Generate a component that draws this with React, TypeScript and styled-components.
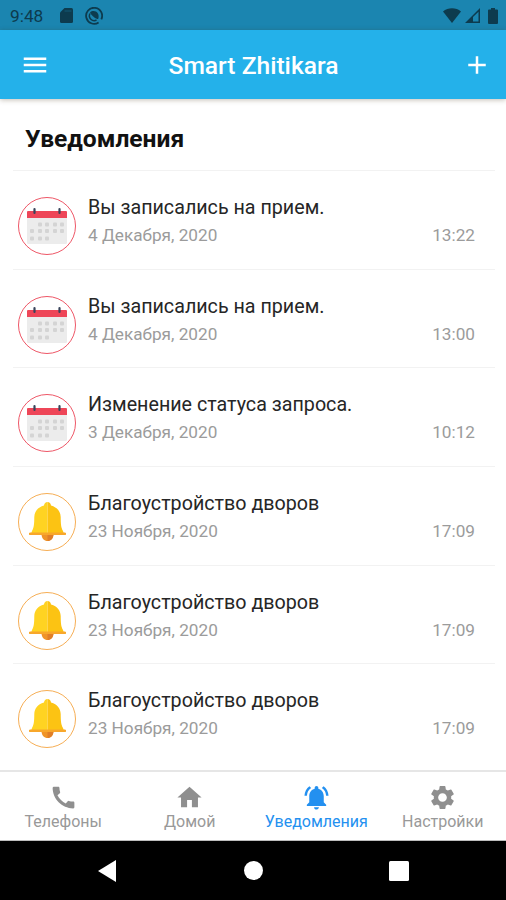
import React from "react";
import styled, { createGlobalStyle } from "styled-components";
import { MdCall, MdHome, MdNotificationsActive, MdSettings, MdMenu, MdAdd } from "react-icons/md";

const GlobalStyle = createGlobalStyle`
  * { box-sizing: border-box; }
  body { margin: 0; background: #fff; font-family: Roboto, "Noto Sans", sans-serif; }
`;

const Screen = styled.div`
  width: 506px;
  height: 900px;
  display: flex;
  flex-direction: column;
  overflow: hidden;
  background: #fff;
`;

const StatusBar = styled.div`
  height: 30px;
  flex: none;
  display: flex;
  align-items: center;
  justify-content: space-between;
  padding: 1px 8px 0 10px;
  background: #1b85b0;
  color: #0d3b4e;
`;

const StatusGroup = styled.div<{ $gap: number }>`
  display: flex;
  align-items: center;
  gap: ${(p) => p.$gap}px;
  svg { display: block; }
`;

const Clock = styled.span`
  width: 36px;
  margin-right: 2px;
  font-size: 17.3px;
  line-height: 28px;
  white-space: nowrap;
`;

const AppBar = styled.header`
  height: 69px;
  flex: none;
  display: grid;
  grid-template-columns: 30px 1fr 30px;
  align-items: center;
  padding: 1px 14px 0 20px;
  background: #24b1ea;
  color: #fff;
  box-shadow: 0 1px 5px rgba(60, 40, 10, 0.3);
  z-index: 1;
  svg { display: block; }
`;

const AppTitle = styled.h1`
  margin: 0 4px 0 0;
  padding: 1px 1px 0 0;
  font-size: 24.6px;
  font-weight: 500;
  line-height: 30px;
  text-align: center;
`;

const Content = styled.main`
  flex: 1;
  min-height: 0;
  padding: 0 11px 0 13px;
`;

const Heading = styled.h2`
  margin: 0;
  height: 71px;
  padding: 25px 0 0 12px;
  font-size: 24.6px;
  line-height: 30px;
  font-weight: 700;
  color: #111;
`;

const Row = styled.article`
  height: 98.7px;
  display: flex;
  border-top: 1px solid #f2f2f2;
  padding: 26px 20px 0 5px;
`;

const Avatar = styled.div<{ $color: string }>`
  width: 58px;
  height: 58px;
  flex: none;
  margin-right: 12px;
  border: 1.5px solid ${(p) => p.$color};
  border-radius: 50%;
  display: flex;
  align-items: center;
  justify-content: center;
  svg { display: block; }
`;

const RowText = styled.div`
  flex: 1;
  min-width: 0;
`;

const RowTitle = styled.div`
  margin-top: -3px;
  font-size: 19.7px;
  line-height: 28px;
  color: #262626;
  white-space: nowrap;
`;

const RowMeta = styled.div`
  display: flex;
  justify-content: space-between;
  margin-top: -1px;
  font-size: 17.2px;
  line-height: 28px;
  color: #9b9b9b;
`;

const TabBar = styled.nav`
  height: 71px;
  flex: none;
  display: grid;
  grid-template-columns: repeat(4, 1fr);
  border-top: 2px solid #e6e6e6;
  border-bottom: 1px solid #bdbdbd;
  background: #fff;
`;

const Tab = styled.div<{ $active?: boolean }>`
  display: flex;
  flex-direction: column;
  align-items: center;
  padding-top: 11px;
  font-size: 16px;
  line-height: 20px;
  white-space: nowrap;
  color: ${(p) => (p.$active ? "#2390f0" : "#999")};
  svg { display: block; color: ${(p) => (p.$active ? "#2390f0" : "#8f8f8f")}; }
`;

const SystemBar = styled.footer`
  height: 59px;
  flex: none;
  display: grid;
  grid-template-columns: 32px 32px 32px;
  justify-content: center;
  column-gap: 114px;
  align-items: center;
  justify-items: center;
  background: #000;
`;

const SdIcon = () => (
  <svg width="13" height="15" viewBox="0 0 13 15">
    <path fill="currentColor" d="M4.500 0h7A1.500 1.500 0 0 1 13 1.500v12A1.500 1.500 0 0 1 11.500 15h-10A1.500 1.500 0 0 1 0 13.500v-9z" />
    <path stroke="#1b85b0" strokeWidth="1.200" opacity=".35" d="M4.500 3h7" />
  </svg>
);

const SyncIcon = () => (
  <svg width="18" height="18" viewBox="0 0 18 18" fill="none" stroke="currentColor">
    <path strokeWidth="1.800" d="M13.600 15.400A8 8 0 1 1 16.300 12.300" />
    <path strokeWidth="1.500" d="M5 6.500a4.800 4.800 0 0 0 6.500 6.500" />
    <path fill="currentColor" stroke="none" d="M5 5.500C7 3.500 11 3.500 12.900 6.400c1 1.700.9 3.700.2 5.700C11 12 6.500 9 5 5.500z" />
  </svg>
);

const WifiIcon = () => (
  <svg width="18" height="15" viewBox="0 0 18 15">
    <path fill="currentColor" d="M9 15 0 3.500C5-.8 13-.8 18 3.500z" />
  </svg>
);

const SignalIcon = () => (
  <svg width="15" height="15" viewBox="0 0 15 15">
    <path fill="currentColor" fillRule="evenodd" d="M15 0v15H0zM13.500 3.700 8 9v4.500h5.500z" />
  </svg>
);

const BatteryIcon = () => (
  <svg width="10" height="16" viewBox="0 0 10 16">
    <path fill="currentColor" d="M3 0h4v1.600h2a1 1 0 0 1 1 1V15a1 1 0 0 1-1 1H1a1 1 0 0 1-1-1V2.600a1 1 0 0 1 1-1h2z" />
  </svg>
);

const dots = [
  [11, 17], [18, 17], [26, 17], [33, 17],
  [3, 23.500], [11, 23.500], [18, 23.500], [26, 23.500], [33, 23.500],
  [3, 31], [11, 31], [18, 31],
];

const CalendarIcon = () => (
  <svg width="40" height="38" viewBox="0 0 40 38">
    <path fill="#ececec" d="M0 10h40v25.500a1.500 1.500 0 0 1-1.500 1.500h-37A1.500 1.500 0 0 1 0 35.500z" />
    <path fill="#ee4658" d="M1 4h38a1 1 0 0 1 1 1V11H0V5a1 1 0 0 1 1-1z" />
    <path stroke="#39455b" strokeWidth="2.200" strokeLinecap="round" d="M7.500 2v4M32.500 2v4" />
    {dots.map(([x, y]) => (
      <rect key={`${x}-${y}`} x={x} y={y - 1.500} width="4" height="4" rx="1" fill="#d4d4d4" />
    ))}
  </svg>
);

const BellIcon = () => (
  <svg width="37" height="40" viewBox="0 0 37 40">
    <path fill="#f09428" d="M12.500 32h12c0 4.500-2.800 7-6 7s-6-2.500-6-7z" />
    <path fill="#e07e28" d="M18.500 32h6c0 4.500-2.800 7-6 7z" />
    <path fill="#ffd322" d="M18.500 0c-2 0-3.200 1.300-3.500 3.500C8.500 5.500 5.500 9.500 5.300 15c-.1 7-.3 10.500-2.300 14L2 32h16.500z" />
    <path fill="#fcc313" d="M18.500 0c2 0 3.200 1.300 3.500 3.500 6.500 2 9.500 6 9.700 11.500.1 7 .3 10.500 2.300 14l1 3H18.500z" />
    <path fill="#f8a72b" d="M1.200 30.500h34.600a1.200 1.200 0 0 1 0 2.600H1.200a1.200 1.200 0 0 1 0-2.600z" />
  </svg>
);

type Kind = "calendar" | "bell";

const notifications: { kind: Kind; title: string; date: string; time: string }[] = [
  { kind: "calendar", title: "Вы записались на прием.", date: "4 Декабря, 2020", time: "13:22" },
  { kind: "calendar", title: "Вы записались на прием.", date: "4 Декабря, 2020", time: "13:00" },
  { kind: "calendar", title: "Изменение статуса запроса.", date: "3 Декабря, 2020", time: "10:12" },
  { kind: "bell", title: "Благоустройство дворов", date: "23 Ноября, 2020", time: "17:09" },
  { kind: "bell", title: "Благоустройство дворов", date: "23 Ноября, 2020", time: "17:09" },
  { kind: "bell", title: "Благоустройство дворов", date: "23 Ноября, 2020", time: "17:09" },
];

const tabs = [
  { label: "Телефоны", Icon: MdCall },
  { label: "Домой", Icon: MdHome },
  { label: "Уведомления", Icon: MdNotificationsActive, active: true },
  { label: "Настройки", Icon: MdSettings },
];

export default function App() {
  return (
    <Screen>
      <GlobalStyle />
      <StatusBar>
        <StatusGroup $gap={12}>
          <Clock>9:48</Clock>
          <SdIcon />
          <SyncIcon />
        </StatusGroup>
        <StatusGroup $gap={4}>
          <WifiIcon />
          <SignalIcon />
          <span />
          <BatteryIcon />
        </StatusGroup>
      </StatusBar>
      <AppBar>
        <MdMenu size={30} />
        <AppTitle>Smart Zhitikara</AppTitle>
        <MdAdd size={30} />
      </AppBar>
      <Content>
        <Heading>Уведомления</Heading>
        {notifications.map((n, i) => (
          <Row key={i}>
            <Avatar $color={n.kind === "calendar" ? "#ee5767" : "#f6ae55"}>
              {n.kind === "calendar" ? <CalendarIcon /> : <BellIcon />}
            </Avatar>
            <RowText>
              <RowTitle>{n.title}</RowTitle>
              <RowMeta>
                <span>{n.date}</span>
                <span>{n.time}</span>
              </RowMeta>
            </RowText>
          </Row>
        ))}
      </Content>
      <TabBar>
        {tabs.map(({ label, Icon, active }) => (
          <Tab key={label} $active={active}>
            <Icon size={29} />
            {label}
          </Tab>
        ))}
      </TabBar>
      <SystemBar>
        <svg width="18" height="22" viewBox="0 0 18 22"><path fill="#fff" d="M18 0v22L0 11z" /></svg>
        <svg width="19" height="19" viewBox="0 0 19 19"><circle cx="9.500" cy="9.500" r="9.500" fill="#fff" /></svg>
        <svg width="20" height="20" viewBox="0 0 20 20"><rect width="20" height="20" rx="1.500" fill="#fff" /></svg>
      </SystemBar>
    </Screen>
  );
}
